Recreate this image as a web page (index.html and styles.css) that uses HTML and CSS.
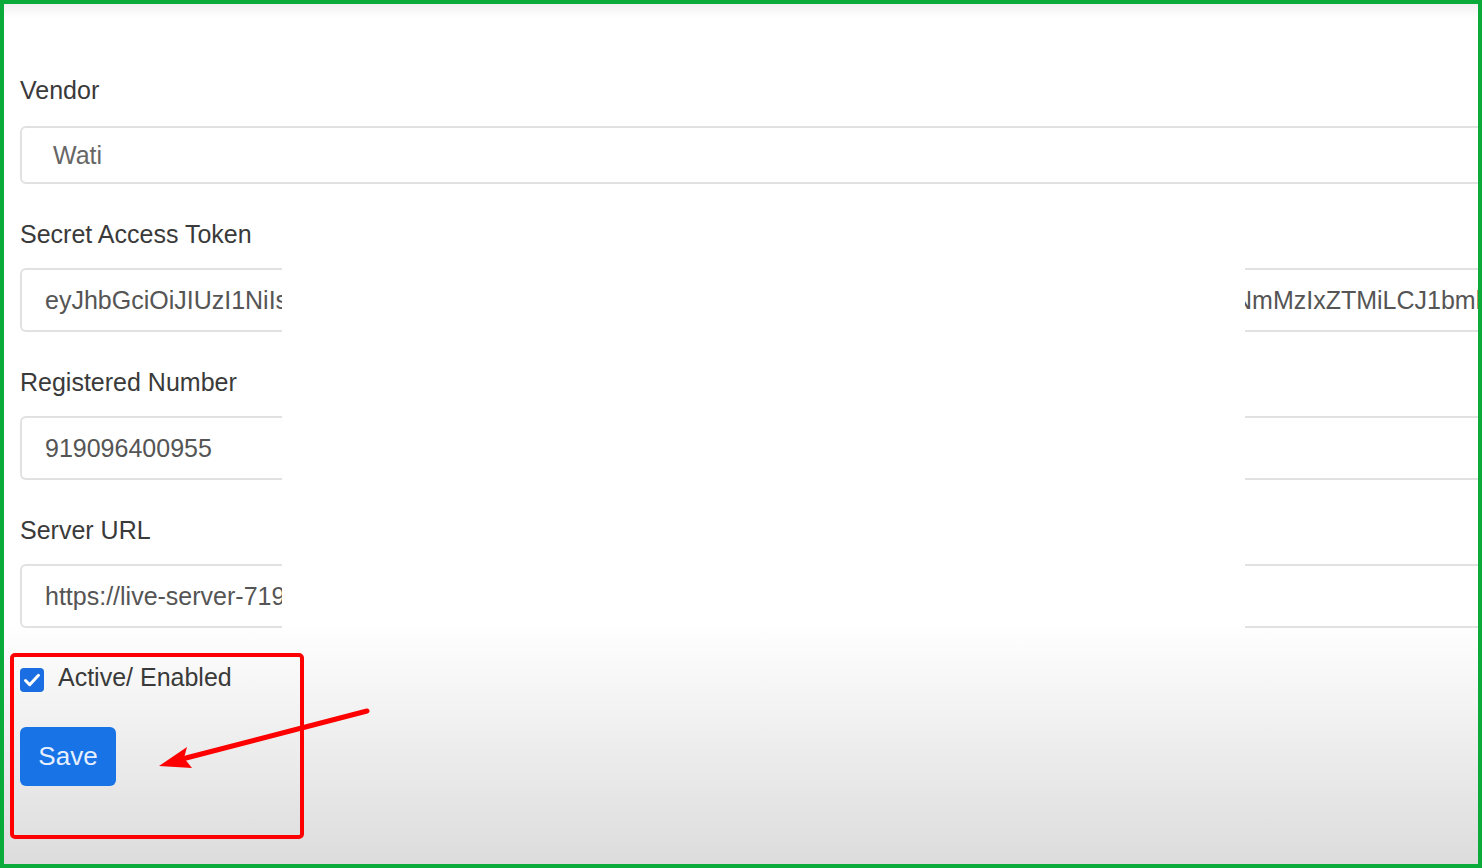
FILE: index.html
```html
<!DOCTYPE html>
<html lang="en">
<head>
<meta charset="utf-8">
<title>Vendor settings</title>
<link rel="stylesheet" href="styles.css">
</head>
<body>
<div class="screen">
  <form class="form">
    <div class="field field-vendor">
      <div class="label">Vendor</div>
      <div class="select">Wati</div>
    </div>
    <div class="field">
      <div class="label">Secret Access Token</div>
      <div class="control">
        <div class="seg seg-left">eyJhbGciOiJIUzI1NiIsInR5cCI6IkpXVCJ9</div>
        <div class="gap"></div>
        <div class="seg seg-right"><span class="tail">NmMzIxZTMiLCJ1bmlxdWVfbmFtZSI6</span></div>
      </div>
    </div>
    <div class="field">
      <div class="label">Registered Number</div>
      <div class="control">
        <div class="seg seg-left">919096400955</div>
        <div class="gap"></div>
        <div class="seg seg-right"></div>
      </div>
    </div>
    <div class="field">
      <div class="label">Server URL</div>
      <div class="control">
        <div class="seg seg-left">https://live-server-7194.wati.io</div>
        <div class="gap"></div>
        <div class="seg seg-right"></div>
      </div>
    </div>
    <div class="check-row">
      <span class="checkbox">
        <svg viewBox="0 0 24 24" width="24" height="24"><path d="M5.5 12.5l4.2 4.2 8.8-9.4" fill="none" stroke="#fff" stroke-width="3" stroke-linecap="round" stroke-linejoin="round"/></svg>
      </span>
      <span class="check-label">Active/ Enabled</span>
    </div>
    <button type="button" class="btn-save">Save</button>
  </form>
  <svg class="annot" viewBox="4 4 1474 860" width="1474" height="860">
    <rect x="12" y="655" width="290" height="182" rx="3" fill="none" stroke="#ff0000" stroke-width="4"/>
    <line x1="367" y1="711" x2="186" y2="758" stroke="#ff0000" stroke-width="5" stroke-linecap="round"/>
    <polygon points="159,766 187,747 184,758 192,768" fill="#ff0000"/>
  </svg>
</div>
</body>
</html>
```
FILE: styles.css
```css
html, body {
  margin: 0;
  height: 868px;
  overflow: hidden;
}
body {
  background: #0aab3b;
  padding: 4px;
  box-sizing: border-box;
}
.screen {
  position: relative;
  height: 860px;
  overflow: hidden;
  background: linear-gradient(to bottom, #f1f1f1 0px, #ffffff 14px, #ffffff 620px, #dcdcdc 860px);
}
.form {
  padding: 72px 0 0 16px;
  font-family: "Liberation Sans", Arial, sans-serif;
  color: #383838;
}
.field {
  margin-bottom: 36px;
}
.label {
  font-size: 25px;
  line-height: 28px;
  margin-bottom: 20px;
  color: #3a3a3a;
}
.field-vendor .label {
  margin-bottom: 22px;
}
.select {
  height: 58px;
  box-sizing: border-box;
  width: calc(100% + 30px);
  border: 2px solid #e1e1e1;
  border-radius: 6px;
  display: flex;
  align-items: center;
  padding-left: 31px;
  font-size: 25px;
  color: #666;
}
.control {
  display: flex;
  height: 64px;
  width: calc(100% + 30px);
}
.seg {
  box-sizing: border-box;
  height: 64px;
  border-top: 2px solid #e1e1e1;
  border-bottom: 2px solid #e1e1e1;
  display: flex;
  align-items: center;
  overflow: hidden;
  white-space: nowrap;
  font-size: 25px;
  color: #555;
}
.seg-left {
  flex: 0 0 262px;
  border-left: 2px solid #e1e1e1;
  border-radius: 6px 0 0 6px;
  padding-left: 23px;
}
.gap {
  flex: 0 0 963px;
}
.seg-right {
  flex: 1 1 auto;
}
.tail {
  margin-left: -11px;
}
.check-row {
  display: flex;
  align-items: center;
  height: 32px;
}
.checkbox {
  width: 24px;
  height: 24px;
  border-radius: 4px;
  background: #1b6ee2;
  display: flex;
}
.check-label {
  margin-left: 14px;
  font-size: 25px;
  line-height: 28px;
  padding-bottom: 6px;
  color: #3a3a3a;
}
.btn-save {
  display: block;
  margin-top: 31px;
  width: 96px;
  height: 59px;
  border: none;
  border-radius: 6px;
  background: #1773e6;
  color: #e6efff;
  font-family: "Liberation Sans", Arial, sans-serif;
  font-size: 26px;
  padding: 0;
}
.annot {
  position: absolute;
  left: 0;
  top: 0;
  pointer-events: none;
}
```
